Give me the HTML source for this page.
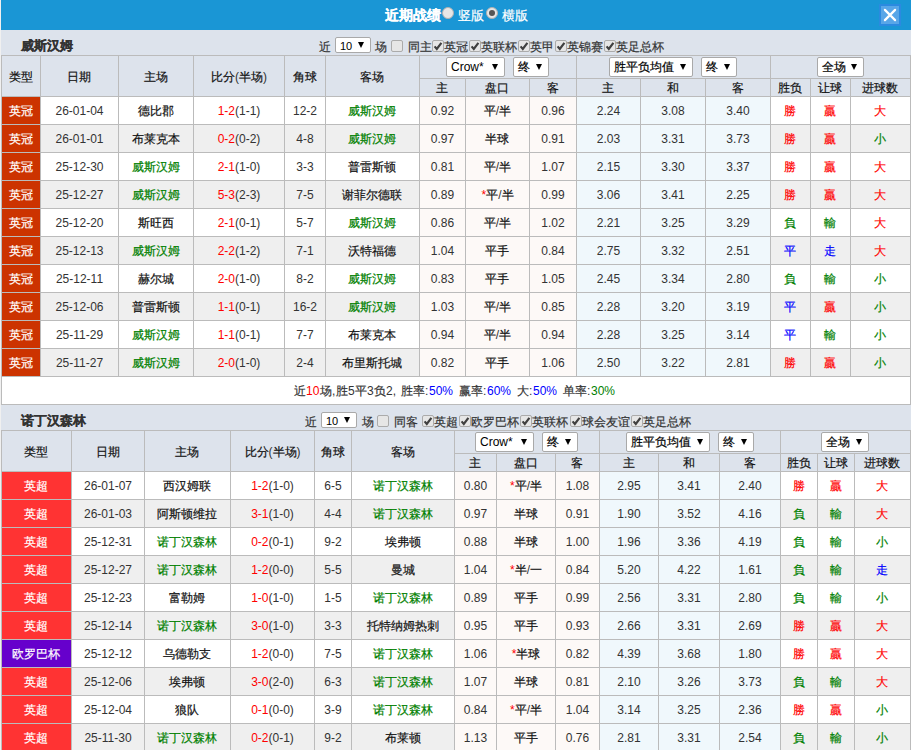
<!DOCTYPE html>
<html><head><meta charset="utf-8"><style>
html,body{margin:0;padding:0}
body{width:911px;height:750px;overflow:hidden;background:#f0f0f0;position:relative;font-family:"Liberation Sans", sans-serif;font-size:12px;color:#333}
#wrap{position:absolute;left:0;top:0;width:911px;height:750px;overflow:hidden}
#bg{position:absolute;left:1px;top:30px;width:910px;height:720px;background:#dde3ec}
#wrap div,#wrap svg{position:absolute}
.t{text-align:center;white-space:nowrap;font-size:12px}
.c{-webkit-text-stroke:0.2px currentColor}
.lt{white-space:nowrap;font-size:12px;color:#222}
.sec{font-weight:bold;font-size:13px;color:#333;white-space:nowrap}
.ttl{font-weight:bold;font-size:14px;color:#fff;white-space:nowrap}
.ttr{font-size:12.6px;color:#fff;white-space:nowrap}
.rad{width:10px;height:10px;border-radius:50%;background:#e6e6e6;border:1px solid #b0b0b0}
.rad .dot{left:2px;top:2px;width:6px;height:6px;border-radius:50%;background:#555}
.cls{width:18px;height:18px;background:#58a6e8;border:2px solid #2b8ae0}
.sel{background:#fff;border:1px solid #a9a9a9;border-radius:2px}
.selt{font-size:12px;color:#000;white-space:nowrap}
.arr{width:0;height:0;border-left:3px solid transparent;border-right:3px solid transparent;border-top:6px solid #000}
.cb{width:10px;height:10px;border:1px solid #ababab;border-radius:2px;background:#e6e6e6}
.ck{}
</style></head>
<body><div id="wrap"><div id="bg"></div>
<div style="left:1px;top:0px;width:910px;height:30px;background:#1a96d5"></div>
<div class="ttl" style="left:385px;top:0px;height:30px;line-height:30px"><span class="c">近期战绩</span></div>
<div class="rad" style="left:442px;top:7px"></div>
<div class="ttr" style="left:458px;top:1px;height:30px;line-height:30px"><span class="c">竖版</span></div>
<div class="rad" style="left:486px;top:7px"><div class="dot"></div></div>
<div class="ttr" style="left:502px;top:1px;height:30px;line-height:30px"><span class="c">横版</span></div>
<div class="cls" style="left:879px;top:4px"><svg width="22" height="22" viewBox="0 0 22 22" style="position:absolute;left:-2px;top:-2px"><path d="M5.9 5.9 L16.1 16.1 M16.1 5.9 L5.9 16.1" stroke="#fff" stroke-width="2.2" stroke-linecap="round"/></svg></div>
<div class="sec" style="left:21px;top:34px;height:24px;line-height:24px"><span class="c">威斯汉姆</span></div>
<div class="lt" style="left:319px;top:35px;height:24px;line-height:24px;color:#333"><span class="c">近</span></div>
<div class="sel" style="left:335px;top:37px;width:34px;height:14px"></div>
<div class="selt" style="left:340px;top:38px;height:16px;line-height:16px;font-size:11px">10</div>
<div class="arr" style="left:358px;top:42px"></div>
<div class="lt" style="left:375px;top:35px;height:24px;line-height:24px;color:#333"><span class="c">场</span></div>
<div class="cb" style="left:391px;top:40px"></div>
<div class="lt" style="left:408px;top:35px;height:24px;line-height:24px;color:#333"><span class="c">同主</span></div>
<div class="cb" style="left:432px;top:40px"></div>
<svg class="ck" style="left:432px;top:40px" width="12" height="12" viewBox="0 0 12 12"><path d="M2.6 6.4 L4.8 9.0 L9.4 2.9" stroke="#404040" stroke-width="2.2" fill="none"/></svg>
<div class="lt" style="left:444px;top:35px;height:24px;line-height:24px;color:#333"><span class="c">英冠</span></div>
<div class="cb" style="left:469px;top:40px"></div>
<svg class="ck" style="left:469px;top:40px" width="12" height="12" viewBox="0 0 12 12"><path d="M2.6 6.4 L4.8 9.0 L9.4 2.9" stroke="#404040" stroke-width="2.2" fill="none"/></svg>
<div class="lt" style="left:481px;top:35px;height:24px;line-height:24px;color:#333"><span class="c">英联杯</span></div>
<div class="cb" style="left:518px;top:40px"></div>
<svg class="ck" style="left:518px;top:40px" width="12" height="12" viewBox="0 0 12 12"><path d="M2.6 6.4 L4.8 9.0 L9.4 2.9" stroke="#404040" stroke-width="2.2" fill="none"/></svg>
<div class="lt" style="left:530px;top:35px;height:24px;line-height:24px;color:#333"><span class="c">英甲</span></div>
<div class="cb" style="left:555px;top:40px"></div>
<svg class="ck" style="left:555px;top:40px" width="12" height="12" viewBox="0 0 12 12"><path d="M2.6 6.4 L4.8 9.0 L9.4 2.9" stroke="#404040" stroke-width="2.2" fill="none"/></svg>
<div class="lt" style="left:567px;top:35px;height:24px;line-height:24px;color:#333"><span class="c">英锦赛</span></div>
<div class="cb" style="left:604px;top:40px"></div>
<svg class="ck" style="left:604px;top:40px" width="12" height="12" viewBox="0 0 12 12"><path d="M2.6 6.4 L4.8 9.0 L9.4 2.9" stroke="#404040" stroke-width="2.2" fill="none"/></svg>
<div class="lt" style="left:616px;top:35px;height:24px;line-height:24px;color:#333"><span class="c">英足总杯</span></div>
<div style="left:1px;top:55px;width:910px;height:41px;background:#dde3ec"></div>
<div style="left:1px;top:96px;width:910px;height:28px;background:#ffffff"></div>
<div style="left:419px;top:96px;width:157px;height:28px;background:#fdf9f7"></div>
<div style="left:576px;top:96px;width:194px;height:28px;background:#f0f8fc"></div>
<div style="left:2px;top:97px;width:38px;height:27px;background:#cc3300"></div>
<div style="left:1px;top:124px;width:910px;height:28px;background:#efefef"></div>
<div style="left:419px;top:124px;width:157px;height:28px;background:#fdf9f7"></div>
<div style="left:576px;top:124px;width:194px;height:28px;background:#f0f8fc"></div>
<div style="left:2px;top:125px;width:38px;height:27px;background:#cc3300"></div>
<div style="left:1px;top:152px;width:910px;height:28px;background:#ffffff"></div>
<div style="left:419px;top:152px;width:157px;height:28px;background:#fdf9f7"></div>
<div style="left:576px;top:152px;width:194px;height:28px;background:#f0f8fc"></div>
<div style="left:2px;top:153px;width:38px;height:27px;background:#cc3300"></div>
<div style="left:1px;top:180px;width:910px;height:28px;background:#efefef"></div>
<div style="left:419px;top:180px;width:157px;height:28px;background:#fdf9f7"></div>
<div style="left:576px;top:180px;width:194px;height:28px;background:#f0f8fc"></div>
<div style="left:2px;top:181px;width:38px;height:27px;background:#cc3300"></div>
<div style="left:1px;top:208px;width:910px;height:28px;background:#ffffff"></div>
<div style="left:419px;top:208px;width:157px;height:28px;background:#fdf9f7"></div>
<div style="left:576px;top:208px;width:194px;height:28px;background:#f0f8fc"></div>
<div style="left:2px;top:209px;width:38px;height:27px;background:#cc3300"></div>
<div style="left:1px;top:236px;width:910px;height:28px;background:#efefef"></div>
<div style="left:419px;top:236px;width:157px;height:28px;background:#fdf9f7"></div>
<div style="left:576px;top:236px;width:194px;height:28px;background:#f0f8fc"></div>
<div style="left:2px;top:237px;width:38px;height:27px;background:#cc3300"></div>
<div style="left:1px;top:264px;width:910px;height:28px;background:#ffffff"></div>
<div style="left:419px;top:264px;width:157px;height:28px;background:#fdf9f7"></div>
<div style="left:576px;top:264px;width:194px;height:28px;background:#f0f8fc"></div>
<div style="left:2px;top:265px;width:38px;height:27px;background:#cc3300"></div>
<div style="left:1px;top:292px;width:910px;height:28px;background:#efefef"></div>
<div style="left:419px;top:292px;width:157px;height:28px;background:#fdf9f7"></div>
<div style="left:576px;top:292px;width:194px;height:28px;background:#f0f8fc"></div>
<div style="left:2px;top:293px;width:38px;height:27px;background:#cc3300"></div>
<div style="left:1px;top:320px;width:910px;height:28px;background:#ffffff"></div>
<div style="left:419px;top:320px;width:157px;height:28px;background:#fdf9f7"></div>
<div style="left:576px;top:320px;width:194px;height:28px;background:#f0f8fc"></div>
<div style="left:2px;top:321px;width:38px;height:27px;background:#cc3300"></div>
<div style="left:1px;top:348px;width:910px;height:28px;background:#efefef"></div>
<div style="left:419px;top:348px;width:157px;height:28px;background:#fdf9f7"></div>
<div style="left:576px;top:348px;width:194px;height:28px;background:#f0f8fc"></div>
<div style="left:2px;top:349px;width:38px;height:27px;background:#cc3300"></div>
<div style="left:1px;top:376px;width:910px;height:28px;background:#ffffff"></div>
<div style="left:1px;top:55px;width:910px;height:1px;background:#bbbbbb"></div>
<div style="left:419px;top:78px;width:492px;height:1px;background:#bbbbbb"></div>
<div style="left:1px;top:96px;width:910px;height:1px;background:#bbbbbb"></div>
<div style="left:1px;top:124px;width:910px;height:1px;background:#bbbbbb"></div>
<div style="left:1px;top:152px;width:910px;height:1px;background:#bbbbbb"></div>
<div style="left:1px;top:180px;width:910px;height:1px;background:#bbbbbb"></div>
<div style="left:1px;top:208px;width:910px;height:1px;background:#bbbbbb"></div>
<div style="left:1px;top:236px;width:910px;height:1px;background:#bbbbbb"></div>
<div style="left:1px;top:264px;width:910px;height:1px;background:#bbbbbb"></div>
<div style="left:1px;top:292px;width:910px;height:1px;background:#bbbbbb"></div>
<div style="left:1px;top:320px;width:910px;height:1px;background:#bbbbbb"></div>
<div style="left:1px;top:348px;width:910px;height:1px;background:#bbbbbb"></div>
<div style="left:1px;top:376px;width:910px;height:1px;background:#bbbbbb"></div>
<div style="left:1px;top:404px;width:910px;height:1px;background:#bbbbbb"></div>
<div style="left:1px;top:55px;width:1px;height:350px;background:#bbbbbb"></div>
<div style="left:40px;top:55px;width:1px;height:322px;background:#bbbbbb"></div>
<div style="left:118px;top:55px;width:1px;height:322px;background:#bbbbbb"></div>
<div style="left:193px;top:55px;width:1px;height:322px;background:#bbbbbb"></div>
<div style="left:284px;top:55px;width:1px;height:322px;background:#bbbbbb"></div>
<div style="left:325px;top:55px;width:1px;height:322px;background:#bbbbbb"></div>
<div style="left:419px;top:55px;width:1px;height:322px;background:#bbbbbb"></div>
<div style="left:465px;top:78px;width:1px;height:299px;background:#bbbbbb"></div>
<div style="left:529px;top:78px;width:1px;height:299px;background:#bbbbbb"></div>
<div style="left:576px;top:55px;width:1px;height:322px;background:#bbbbbb"></div>
<div style="left:640px;top:78px;width:1px;height:299px;background:#bbbbbb"></div>
<div style="left:705px;top:78px;width:1px;height:299px;background:#bbbbbb"></div>
<div style="left:770px;top:55px;width:1px;height:322px;background:#bbbbbb"></div>
<div style="left:810px;top:78px;width:1px;height:299px;background:#bbbbbb"></div>
<div style="left:850px;top:78px;width:1px;height:299px;background:#bbbbbb"></div>
<div style="left:910px;top:55px;width:1px;height:350px;background:#bbbbbb"></div>
<div class="t" style="left:2px;top:57px;width:38px;height:40px;line-height:40px;color:#333"><span style="color:#111"><span class="c">类型</span></span></div>
<div class="t" style="left:41px;top:57px;width:76px;height:40px;line-height:40px;color:#333"><span style="color:#111"><span class="c">日期</span></span></div>
<div class="t" style="left:119px;top:57px;width:74px;height:40px;line-height:40px;color:#333"><span style="color:#111"><span class="c">主场</span></span></div>
<div class="t" style="left:194px;top:57px;width:90px;height:40px;line-height:40px;color:#333"><span style="color:#111"><span class="c">比分</span></span>(<span style="color:#111"><span class="c">半场</span></span>)</div>
<div class="t" style="left:285px;top:57px;width:40px;height:40px;line-height:40px;color:#333"><span style="color:#111"><span class="c">角球</span></span></div>
<div class="t" style="left:326px;top:57px;width:92px;height:40px;line-height:40px;color:#333"><span style="color:#111"><span class="c">客场</span></span></div>
<div class="t" style="left:420px;top:80px;width:44px;height:17px;line-height:17px;color:#333"><span style="color:#111"><span class="c">主</span></span></div>
<div class="t" style="left:466px;top:80px;width:62px;height:17px;line-height:17px;color:#333"><span style="color:#111"><span class="c">盘口</span></span></div>
<div class="t" style="left:530px;top:80px;width:46px;height:17px;line-height:17px;color:#333"><span style="color:#111"><span class="c">客</span></span></div>
<div class="t" style="left:577px;top:80px;width:62px;height:17px;line-height:17px;color:#333"><span style="color:#111"><span class="c">主</span></span></div>
<div class="t" style="left:641px;top:80px;width:64px;height:17px;line-height:17px;color:#333"><span style="color:#111"><span class="c">和</span></span></div>
<div class="t" style="left:706px;top:80px;width:64px;height:17px;line-height:17px;color:#333"><span style="color:#111"><span class="c">客</span></span></div>
<div class="t" style="left:771px;top:80px;width:38px;height:17px;line-height:17px;color:#333"><span style="color:#111"><span class="c">胜负</span></span></div>
<div class="t" style="left:811px;top:80px;width:38px;height:17px;line-height:17px;color:#333"><span style="color:#111"><span class="c">让球</span></span></div>
<div class="t" style="left:851px;top:80px;width:58px;height:17px;line-height:17px;color:#333"><span style="color:#111"><span class="c">进球数</span></span></div>
<div class="t" style="left:2px;top:98px;width:38px;height:27px;line-height:27px;color:#ffffff"><span class="c">英冠</span></div>
<div class="t" style="left:41px;top:98px;width:77px;height:27px;line-height:27px;color:#333">26-01-04</div>
<div class="t" style="left:119px;top:98px;width:74px;height:27px;line-height:27px;color:#333"><span style="color:#111"><span class="c">德比郡</span></span></div>
<div class="t" style="left:194px;top:98px;width:90px;height:27px;line-height:27px;color:#333"><span style="color:#ff0000">1-2</span>(1-1)</div>
<div class="t" style="left:285px;top:98px;width:40px;height:27px;line-height:27px;color:#333">12-2</div>
<div class="t" style="left:326px;top:98px;width:92px;height:27px;line-height:27px;color:#333"><span style="color:#008000"><span class="c">威斯汉姆</span></span></div>
<div class="t" style="left:420px;top:98px;width:45px;height:27px;line-height:27px;color:#333">0.92</div>
<div class="t" style="left:466px;top:98px;width:63px;height:27px;line-height:27px;color:#333"><span style="color:#111"><span class="c">平</span></span>/<span style="color:#111"><span class="c">半</span></span></div>
<div class="t" style="left:530px;top:98px;width:46px;height:27px;line-height:27px;color:#333">0.96</div>
<div class="t" style="left:577px;top:98px;width:63px;height:27px;line-height:27px;color:#333">2.24</div>
<div class="t" style="left:641px;top:98px;width:64px;height:27px;line-height:27px;color:#333">3.08</div>
<div class="t" style="left:706px;top:98px;width:64px;height:27px;line-height:27px;color:#333">3.40</div>
<div class="t" style="left:771px;top:98px;width:38px;height:27px;line-height:27px;color:#ff0000"><span class="c">勝</span></div>
<div class="t" style="left:811px;top:98px;width:38px;height:27px;line-height:27px;color:#ff0000"><span class="c">贏</span></div>
<div class="t" style="left:851px;top:98px;width:58px;height:27px;line-height:27px;color:#ff0000"><span class="c">大</span></div>
<div class="t" style="left:2px;top:126px;width:38px;height:27px;line-height:27px;color:#ffffff"><span class="c">英冠</span></div>
<div class="t" style="left:41px;top:126px;width:77px;height:27px;line-height:27px;color:#333">26-01-01</div>
<div class="t" style="left:119px;top:126px;width:74px;height:27px;line-height:27px;color:#333"><span style="color:#111"><span class="c">布莱克本</span></span></div>
<div class="t" style="left:194px;top:126px;width:90px;height:27px;line-height:27px;color:#333"><span style="color:#ff0000">0-2</span>(0-2)</div>
<div class="t" style="left:285px;top:126px;width:40px;height:27px;line-height:27px;color:#333">4-8</div>
<div class="t" style="left:326px;top:126px;width:92px;height:27px;line-height:27px;color:#333"><span style="color:#008000"><span class="c">威斯汉姆</span></span></div>
<div class="t" style="left:420px;top:126px;width:45px;height:27px;line-height:27px;color:#333">0.97</div>
<div class="t" style="left:466px;top:126px;width:62px;height:27px;line-height:27px;color:#333"><span style="color:#111"><span class="c">半球</span></span></div>
<div class="t" style="left:530px;top:126px;width:46px;height:27px;line-height:27px;color:#333">0.91</div>
<div class="t" style="left:577px;top:126px;width:63px;height:27px;line-height:27px;color:#333">2.03</div>
<div class="t" style="left:641px;top:126px;width:64px;height:27px;line-height:27px;color:#333">3.31</div>
<div class="t" style="left:706px;top:126px;width:64px;height:27px;line-height:27px;color:#333">3.73</div>
<div class="t" style="left:771px;top:126px;width:38px;height:27px;line-height:27px;color:#ff0000"><span class="c">勝</span></div>
<div class="t" style="left:811px;top:126px;width:38px;height:27px;line-height:27px;color:#ff0000"><span class="c">贏</span></div>
<div class="t" style="left:851px;top:126px;width:58px;height:27px;line-height:27px;color:#008000"><span class="c">小</span></div>
<div class="t" style="left:2px;top:154px;width:38px;height:27px;line-height:27px;color:#ffffff"><span class="c">英冠</span></div>
<div class="t" style="left:41px;top:154px;width:77px;height:27px;line-height:27px;color:#333">25-12-30</div>
<div class="t" style="left:119px;top:154px;width:74px;height:27px;line-height:27px;color:#333"><span style="color:#008000"><span class="c">威斯汉姆</span></span></div>
<div class="t" style="left:194px;top:154px;width:90px;height:27px;line-height:27px;color:#333"><span style="color:#ff0000">2-1</span>(1-0)</div>
<div class="t" style="left:285px;top:154px;width:40px;height:27px;line-height:27px;color:#333">3-3</div>
<div class="t" style="left:326px;top:154px;width:92px;height:27px;line-height:27px;color:#333"><span style="color:#111"><span class="c">普雷斯顿</span></span></div>
<div class="t" style="left:420px;top:154px;width:45px;height:27px;line-height:27px;color:#333">0.81</div>
<div class="t" style="left:466px;top:154px;width:63px;height:27px;line-height:27px;color:#333"><span style="color:#111"><span class="c">平</span></span>/<span style="color:#111"><span class="c">半</span></span></div>
<div class="t" style="left:530px;top:154px;width:46px;height:27px;line-height:27px;color:#333">1.07</div>
<div class="t" style="left:577px;top:154px;width:63px;height:27px;line-height:27px;color:#333">2.15</div>
<div class="t" style="left:641px;top:154px;width:64px;height:27px;line-height:27px;color:#333">3.30</div>
<div class="t" style="left:706px;top:154px;width:64px;height:27px;line-height:27px;color:#333">3.37</div>
<div class="t" style="left:771px;top:154px;width:38px;height:27px;line-height:27px;color:#ff0000"><span class="c">勝</span></div>
<div class="t" style="left:811px;top:154px;width:38px;height:27px;line-height:27px;color:#ff0000"><span class="c">贏</span></div>
<div class="t" style="left:851px;top:154px;width:58px;height:27px;line-height:27px;color:#ff0000"><span class="c">大</span></div>
<div class="t" style="left:2px;top:182px;width:38px;height:27px;line-height:27px;color:#ffffff"><span class="c">英冠</span></div>
<div class="t" style="left:41px;top:182px;width:77px;height:27px;line-height:27px;color:#333">25-12-27</div>
<div class="t" style="left:119px;top:182px;width:74px;height:27px;line-height:27px;color:#333"><span style="color:#008000"><span class="c">威斯汉姆</span></span></div>
<div class="t" style="left:194px;top:182px;width:90px;height:27px;line-height:27px;color:#333"><span style="color:#ff0000">5-3</span>(2-3)</div>
<div class="t" style="left:285px;top:182px;width:40px;height:27px;line-height:27px;color:#333">7-5</div>
<div class="t" style="left:326px;top:182px;width:92px;height:27px;line-height:27px;color:#333"><span style="color:#111"><span class="c">谢菲尔德联</span></span></div>
<div class="t" style="left:420px;top:182px;width:45px;height:27px;line-height:27px;color:#333">0.89</div>
<div class="t" style="left:466px;top:182px;width:63px;height:27px;line-height:27px;color:#333"><span style="color:#ff0000">*</span><span style="color:#111"><span class="c">平</span></span>/<span style="color:#111"><span class="c">半</span></span></div>
<div class="t" style="left:530px;top:182px;width:46px;height:27px;line-height:27px;color:#333">0.99</div>
<div class="t" style="left:577px;top:182px;width:63px;height:27px;line-height:27px;color:#333">3.06</div>
<div class="t" style="left:641px;top:182px;width:64px;height:27px;line-height:27px;color:#333">3.41</div>
<div class="t" style="left:706px;top:182px;width:64px;height:27px;line-height:27px;color:#333">2.25</div>
<div class="t" style="left:771px;top:182px;width:38px;height:27px;line-height:27px;color:#ff0000"><span class="c">勝</span></div>
<div class="t" style="left:811px;top:182px;width:38px;height:27px;line-height:27px;color:#ff0000"><span class="c">贏</span></div>
<div class="t" style="left:851px;top:182px;width:58px;height:27px;line-height:27px;color:#ff0000"><span class="c">大</span></div>
<div class="t" style="left:2px;top:210px;width:38px;height:27px;line-height:27px;color:#ffffff"><span class="c">英冠</span></div>
<div class="t" style="left:41px;top:210px;width:77px;height:27px;line-height:27px;color:#333">25-12-20</div>
<div class="t" style="left:119px;top:210px;width:74px;height:27px;line-height:27px;color:#333"><span style="color:#111"><span class="c">斯旺西</span></span></div>
<div class="t" style="left:194px;top:210px;width:90px;height:27px;line-height:27px;color:#333"><span style="color:#ff0000">2-1</span>(0-1)</div>
<div class="t" style="left:285px;top:210px;width:40px;height:27px;line-height:27px;color:#333">5-7</div>
<div class="t" style="left:326px;top:210px;width:92px;height:27px;line-height:27px;color:#333"><span style="color:#008000"><span class="c">威斯汉姆</span></span></div>
<div class="t" style="left:420px;top:210px;width:45px;height:27px;line-height:27px;color:#333">0.86</div>
<div class="t" style="left:466px;top:210px;width:63px;height:27px;line-height:27px;color:#333"><span style="color:#111"><span class="c">平</span></span>/<span style="color:#111"><span class="c">半</span></span></div>
<div class="t" style="left:530px;top:210px;width:46px;height:27px;line-height:27px;color:#333">1.02</div>
<div class="t" style="left:577px;top:210px;width:63px;height:27px;line-height:27px;color:#333">2.21</div>
<div class="t" style="left:641px;top:210px;width:64px;height:27px;line-height:27px;color:#333">3.25</div>
<div class="t" style="left:706px;top:210px;width:64px;height:27px;line-height:27px;color:#333">3.29</div>
<div class="t" style="left:771px;top:210px;width:38px;height:27px;line-height:27px;color:#008000"><span class="c">負</span></div>
<div class="t" style="left:811px;top:210px;width:38px;height:27px;line-height:27px;color:#008000"><span class="c">輸</span></div>
<div class="t" style="left:851px;top:210px;width:58px;height:27px;line-height:27px;color:#ff0000"><span class="c">大</span></div>
<div class="t" style="left:2px;top:238px;width:38px;height:27px;line-height:27px;color:#ffffff"><span class="c">英冠</span></div>
<div class="t" style="left:41px;top:238px;width:77px;height:27px;line-height:27px;color:#333">25-12-13</div>
<div class="t" style="left:119px;top:238px;width:74px;height:27px;line-height:27px;color:#333"><span style="color:#008000"><span class="c">威斯汉姆</span></span></div>
<div class="t" style="left:194px;top:238px;width:90px;height:27px;line-height:27px;color:#333"><span style="color:#ff0000">2-2</span>(1-2)</div>
<div class="t" style="left:285px;top:238px;width:40px;height:27px;line-height:27px;color:#333">7-1</div>
<div class="t" style="left:326px;top:238px;width:92px;height:27px;line-height:27px;color:#333"><span style="color:#111"><span class="c">沃特福德</span></span></div>
<div class="t" style="left:420px;top:238px;width:45px;height:27px;line-height:27px;color:#333">1.04</div>
<div class="t" style="left:466px;top:238px;width:62px;height:27px;line-height:27px;color:#333"><span style="color:#111"><span class="c">平手</span></span></div>
<div class="t" style="left:530px;top:238px;width:46px;height:27px;line-height:27px;color:#333">0.84</div>
<div class="t" style="left:577px;top:238px;width:63px;height:27px;line-height:27px;color:#333">2.75</div>
<div class="t" style="left:641px;top:238px;width:64px;height:27px;line-height:27px;color:#333">3.32</div>
<div class="t" style="left:706px;top:238px;width:64px;height:27px;line-height:27px;color:#333">2.51</div>
<div class="t" style="left:771px;top:238px;width:38px;height:27px;line-height:27px;color:#0000ff"><span class="c">平</span></div>
<div class="t" style="left:811px;top:238px;width:38px;height:27px;line-height:27px;color:#0000ff"><span class="c">走</span></div>
<div class="t" style="left:851px;top:238px;width:58px;height:27px;line-height:27px;color:#ff0000"><span class="c">大</span></div>
<div class="t" style="left:2px;top:266px;width:38px;height:27px;line-height:27px;color:#ffffff"><span class="c">英冠</span></div>
<div class="t" style="left:41px;top:266px;width:77px;height:27px;line-height:27px;color:#333">25-12-11</div>
<div class="t" style="left:119px;top:266px;width:74px;height:27px;line-height:27px;color:#333"><span style="color:#111"><span class="c">赫尔城</span></span></div>
<div class="t" style="left:194px;top:266px;width:90px;height:27px;line-height:27px;color:#333"><span style="color:#ff0000">2-0</span>(1-0)</div>
<div class="t" style="left:285px;top:266px;width:40px;height:27px;line-height:27px;color:#333">8-2</div>
<div class="t" style="left:326px;top:266px;width:92px;height:27px;line-height:27px;color:#333"><span style="color:#008000"><span class="c">威斯汉姆</span></span></div>
<div class="t" style="left:420px;top:266px;width:45px;height:27px;line-height:27px;color:#333">0.83</div>
<div class="t" style="left:466px;top:266px;width:62px;height:27px;line-height:27px;color:#333"><span style="color:#111"><span class="c">平手</span></span></div>
<div class="t" style="left:530px;top:266px;width:46px;height:27px;line-height:27px;color:#333">1.05</div>
<div class="t" style="left:577px;top:266px;width:63px;height:27px;line-height:27px;color:#333">2.45</div>
<div class="t" style="left:641px;top:266px;width:64px;height:27px;line-height:27px;color:#333">3.34</div>
<div class="t" style="left:706px;top:266px;width:64px;height:27px;line-height:27px;color:#333">2.80</div>
<div class="t" style="left:771px;top:266px;width:38px;height:27px;line-height:27px;color:#008000"><span class="c">負</span></div>
<div class="t" style="left:811px;top:266px;width:38px;height:27px;line-height:27px;color:#008000"><span class="c">輸</span></div>
<div class="t" style="left:851px;top:266px;width:58px;height:27px;line-height:27px;color:#008000"><span class="c">小</span></div>
<div class="t" style="left:2px;top:294px;width:38px;height:27px;line-height:27px;color:#ffffff"><span class="c">英冠</span></div>
<div class="t" style="left:41px;top:294px;width:77px;height:27px;line-height:27px;color:#333">25-12-06</div>
<div class="t" style="left:119px;top:294px;width:74px;height:27px;line-height:27px;color:#333"><span style="color:#111"><span class="c">普雷斯顿</span></span></div>
<div class="t" style="left:194px;top:294px;width:90px;height:27px;line-height:27px;color:#333"><span style="color:#ff0000">1-1</span>(0-1)</div>
<div class="t" style="left:285px;top:294px;width:40px;height:27px;line-height:27px;color:#333">16-2</div>
<div class="t" style="left:326px;top:294px;width:92px;height:27px;line-height:27px;color:#333"><span style="color:#008000"><span class="c">威斯汉姆</span></span></div>
<div class="t" style="left:420px;top:294px;width:45px;height:27px;line-height:27px;color:#333">1.03</div>
<div class="t" style="left:466px;top:294px;width:63px;height:27px;line-height:27px;color:#333"><span style="color:#111"><span class="c">平</span></span>/<span style="color:#111"><span class="c">半</span></span></div>
<div class="t" style="left:530px;top:294px;width:46px;height:27px;line-height:27px;color:#333">0.85</div>
<div class="t" style="left:577px;top:294px;width:63px;height:27px;line-height:27px;color:#333">2.28</div>
<div class="t" style="left:641px;top:294px;width:64px;height:27px;line-height:27px;color:#333">3.20</div>
<div class="t" style="left:706px;top:294px;width:64px;height:27px;line-height:27px;color:#333">3.19</div>
<div class="t" style="left:771px;top:294px;width:38px;height:27px;line-height:27px;color:#0000ff"><span class="c">平</span></div>
<div class="t" style="left:811px;top:294px;width:38px;height:27px;line-height:27px;color:#ff0000"><span class="c">贏</span></div>
<div class="t" style="left:851px;top:294px;width:58px;height:27px;line-height:27px;color:#008000"><span class="c">小</span></div>
<div class="t" style="left:2px;top:322px;width:38px;height:27px;line-height:27px;color:#ffffff"><span class="c">英冠</span></div>
<div class="t" style="left:41px;top:322px;width:77px;height:27px;line-height:27px;color:#333">25-11-29</div>
<div class="t" style="left:119px;top:322px;width:74px;height:27px;line-height:27px;color:#333"><span style="color:#008000"><span class="c">威斯汉姆</span></span></div>
<div class="t" style="left:194px;top:322px;width:90px;height:27px;line-height:27px;color:#333"><span style="color:#ff0000">1-1</span>(0-1)</div>
<div class="t" style="left:285px;top:322px;width:40px;height:27px;line-height:27px;color:#333">7-7</div>
<div class="t" style="left:326px;top:322px;width:92px;height:27px;line-height:27px;color:#333"><span style="color:#111"><span class="c">布莱克本</span></span></div>
<div class="t" style="left:420px;top:322px;width:45px;height:27px;line-height:27px;color:#333">0.94</div>
<div class="t" style="left:466px;top:322px;width:63px;height:27px;line-height:27px;color:#333"><span style="color:#111"><span class="c">平</span></span>/<span style="color:#111"><span class="c">半</span></span></div>
<div class="t" style="left:530px;top:322px;width:46px;height:27px;line-height:27px;color:#333">0.94</div>
<div class="t" style="left:577px;top:322px;width:63px;height:27px;line-height:27px;color:#333">2.28</div>
<div class="t" style="left:641px;top:322px;width:64px;height:27px;line-height:27px;color:#333">3.25</div>
<div class="t" style="left:706px;top:322px;width:64px;height:27px;line-height:27px;color:#333">3.14</div>
<div class="t" style="left:771px;top:322px;width:38px;height:27px;line-height:27px;color:#0000ff"><span class="c">平</span></div>
<div class="t" style="left:811px;top:322px;width:38px;height:27px;line-height:27px;color:#008000"><span class="c">輸</span></div>
<div class="t" style="left:851px;top:322px;width:58px;height:27px;line-height:27px;color:#008000"><span class="c">小</span></div>
<div class="t" style="left:2px;top:350px;width:38px;height:27px;line-height:27px;color:#ffffff"><span class="c">英冠</span></div>
<div class="t" style="left:41px;top:350px;width:77px;height:27px;line-height:27px;color:#333">25-11-27</div>
<div class="t" style="left:119px;top:350px;width:74px;height:27px;line-height:27px;color:#333"><span style="color:#008000"><span class="c">威斯汉姆</span></span></div>
<div class="t" style="left:194px;top:350px;width:90px;height:27px;line-height:27px;color:#333"><span style="color:#ff0000">2-0</span>(1-0)</div>
<div class="t" style="left:285px;top:350px;width:40px;height:27px;line-height:27px;color:#333">2-4</div>
<div class="t" style="left:326px;top:350px;width:92px;height:27px;line-height:27px;color:#333"><span style="color:#111"><span class="c">布里斯托城</span></span></div>
<div class="t" style="left:420px;top:350px;width:45px;height:27px;line-height:27px;color:#333">0.82</div>
<div class="t" style="left:466px;top:350px;width:62px;height:27px;line-height:27px;color:#333"><span style="color:#111"><span class="c">平手</span></span></div>
<div class="t" style="left:530px;top:350px;width:46px;height:27px;line-height:27px;color:#333">1.06</div>
<div class="t" style="left:577px;top:350px;width:63px;height:27px;line-height:27px;color:#333">2.50</div>
<div class="t" style="left:641px;top:350px;width:64px;height:27px;line-height:27px;color:#333">3.22</div>
<div class="t" style="left:706px;top:350px;width:64px;height:27px;line-height:27px;color:#333">2.81</div>
<div class="t" style="left:771px;top:350px;width:38px;height:27px;line-height:27px;color:#ff0000"><span class="c">勝</span></div>
<div class="t" style="left:811px;top:350px;width:38px;height:27px;line-height:27px;color:#ff0000"><span class="c">贏</span></div>
<div class="t" style="left:851px;top:350px;width:58px;height:27px;line-height:27px;color:#008000"><span class="c">小</span></div>
<div class="lt" style="left:294px;top:378px;height:27px;line-height:27px;color:#333"><span class="c">近</span></div>
<div class="lt" style="left:306px;top:378px;height:27px;line-height:27px;color:#ff0000">10</div>
<div class="lt" style="left:320px;top:378px;height:27px;line-height:27px;color:#333"><span class="c">场</span>,</div>
<div class="lt" style="left:336px;top:378px;height:27px;line-height:27px;color:#333"><span class="c">胜</span></div>
<div class="lt" style="left:348px;top:378px;height:27px;line-height:27px;color:#333">5</div>
<div class="lt" style="left:355px;top:378px;height:27px;line-height:27px;color:#333"><span class="c">平</span></div>
<div class="lt" style="left:367px;top:378px;height:27px;line-height:27px;color:#333">3</div>
<div class="lt" style="left:374px;top:378px;height:27px;line-height:27px;color:#333"><span class="c">负</span></div>
<div class="lt" style="left:386px;top:378px;height:27px;line-height:27px;color:#333">2,</div>
<div class="lt" style="left:401px;top:378px;height:27px;line-height:27px;color:#333"><span class="c">胜率</span></div>
<div class="lt" style="left:425px;top:378px;height:27px;line-height:27px;color:#333">:</div>
<div class="lt" style="left:429px;top:378px;height:27px;line-height:27px;color:#0000ff">50%</div>
<div class="lt" style="left:459px;top:378px;height:27px;line-height:27px;color:#333"><span class="c">赢率</span></div>
<div class="lt" style="left:483px;top:378px;height:27px;line-height:27px;color:#333">:</div>
<div class="lt" style="left:487px;top:378px;height:27px;line-height:27px;color:#0000ff">60%</div>
<div class="lt" style="left:517px;top:378px;height:27px;line-height:27px;color:#333"><span class="c">大</span></div>
<div class="lt" style="left:529px;top:378px;height:27px;line-height:27px;color:#333">:</div>
<div class="lt" style="left:533px;top:378px;height:27px;line-height:27px;color:#0000ff">50%</div>
<div class="lt" style="left:563px;top:378px;height:27px;line-height:27px;color:#333"><span class="c">单率</span></div>
<div class="lt" style="left:587px;top:378px;height:27px;line-height:27px;color:#333">:</div>
<div class="lt" style="left:591px;top:378px;height:27px;line-height:27px;color:#008000">30%</div>
<div class="sel" style="left:446px;top:57px;width:57px;height:18px"></div>
<div class="selt" style="left:451px;top:57px;height:20px;line-height:20px;font-size:12px">Crow*</div>
<div class="arr" style="left:492px;top:64px"></div>
<div class="sel" style="left:513px;top:57px;width:34px;height:18px"></div>
<div class="selt" style="left:518px;top:57px;height:20px;line-height:20px;font-size:12px"><span class="c">终</span></div>
<div class="arr" style="left:536px;top:64px"></div>
<div class="sel" style="left:609px;top:57px;width:82px;height:18px"></div>
<div class="selt" style="left:614px;top:57px;height:20px;line-height:20px;font-size:12px"><span class="c">胜平负均值</span></div>
<div class="arr" style="left:680px;top:64px"></div>
<div class="sel" style="left:701px;top:57px;width:34px;height:18px"></div>
<div class="selt" style="left:706px;top:57px;height:20px;line-height:20px;font-size:12px"><span class="c">终</span></div>
<div class="arr" style="left:724px;top:64px"></div>
<div class="sel" style="left:817px;top:57px;width:45px;height:18px"></div>
<div class="selt" style="left:822px;top:57px;height:20px;line-height:20px;font-size:12px"><span class="c">全场</span></div>
<div class="arr" style="left:851px;top:64px"></div>
<div class="sec" style="left:21px;top:409px;height:24px;line-height:24px"><span class="c">诺丁汉森林</span></div>
<div class="lt" style="left:305px;top:410px;height:24px;line-height:24px;color:#333"><span class="c">近</span></div>
<div class="sel" style="left:321px;top:412px;width:34px;height:14px"></div>
<div class="selt" style="left:326px;top:413px;height:16px;line-height:16px;font-size:11px">10</div>
<div class="arr" style="left:344px;top:417px"></div>
<div class="lt" style="left:362px;top:410px;height:24px;line-height:24px;color:#333"><span class="c">场</span></div>
<div class="cb" style="left:377px;top:415px"></div>
<div class="lt" style="left:394px;top:410px;height:24px;line-height:24px;color:#333"><span class="c">同客</span></div>
<div class="cb" style="left:422px;top:415px"></div>
<svg class="ck" style="left:422px;top:415px" width="12" height="12" viewBox="0 0 12 12"><path d="M2.6 6.4 L4.8 9.0 L9.4 2.9" stroke="#404040" stroke-width="2.2" fill="none"/></svg>
<div class="lt" style="left:434px;top:410px;height:24px;line-height:24px;color:#333"><span class="c">英超</span></div>
<div class="cb" style="left:459px;top:415px"></div>
<svg class="ck" style="left:459px;top:415px" width="12" height="12" viewBox="0 0 12 12"><path d="M2.6 6.4 L4.8 9.0 L9.4 2.9" stroke="#404040" stroke-width="2.2" fill="none"/></svg>
<div class="lt" style="left:471px;top:410px;height:24px;line-height:24px;color:#333"><span class="c">欧罗巴杯</span></div>
<div class="cb" style="left:520px;top:415px"></div>
<svg class="ck" style="left:520px;top:415px" width="12" height="12" viewBox="0 0 12 12"><path d="M2.6 6.4 L4.8 9.0 L9.4 2.9" stroke="#404040" stroke-width="2.2" fill="none"/></svg>
<div class="lt" style="left:532px;top:410px;height:24px;line-height:24px;color:#333"><span class="c">英联杯</span></div>
<div class="cb" style="left:570px;top:415px"></div>
<svg class="ck" style="left:570px;top:415px" width="12" height="12" viewBox="0 0 12 12"><path d="M2.6 6.4 L4.8 9.0 L9.4 2.9" stroke="#404040" stroke-width="2.2" fill="none"/></svg>
<div class="lt" style="left:582px;top:410px;height:24px;line-height:24px;color:#333"><span class="c">球会友谊</span></div>
<div class="cb" style="left:631px;top:415px"></div>
<svg class="ck" style="left:631px;top:415px" width="12" height="12" viewBox="0 0 12 12"><path d="M2.6 6.4 L4.8 9.0 L9.4 2.9" stroke="#404040" stroke-width="2.2" fill="none"/></svg>
<div class="lt" style="left:643px;top:410px;height:24px;line-height:24px;color:#333"><span class="c">英足总杯</span></div>
<div style="left:1px;top:430px;width:910px;height:41px;background:#dde3ec"></div>
<div style="left:1px;top:471px;width:910px;height:28px;background:#ffffff"></div>
<div style="left:454px;top:471px;width:145px;height:28px;background:#fdf9f7"></div>
<div style="left:599px;top:471px;width:181px;height:28px;background:#f0f8fc"></div>
<div style="left:2px;top:472px;width:69px;height:27px;background:#ff3333"></div>
<div style="left:1px;top:499px;width:910px;height:28px;background:#efefef"></div>
<div style="left:454px;top:499px;width:145px;height:28px;background:#fdf9f7"></div>
<div style="left:599px;top:499px;width:181px;height:28px;background:#f0f8fc"></div>
<div style="left:2px;top:500px;width:69px;height:27px;background:#ff3333"></div>
<div style="left:1px;top:527px;width:910px;height:28px;background:#ffffff"></div>
<div style="left:454px;top:527px;width:145px;height:28px;background:#fdf9f7"></div>
<div style="left:599px;top:527px;width:181px;height:28px;background:#f0f8fc"></div>
<div style="left:2px;top:528px;width:69px;height:27px;background:#ff3333"></div>
<div style="left:1px;top:555px;width:910px;height:28px;background:#efefef"></div>
<div style="left:454px;top:555px;width:145px;height:28px;background:#fdf9f7"></div>
<div style="left:599px;top:555px;width:181px;height:28px;background:#f0f8fc"></div>
<div style="left:2px;top:556px;width:69px;height:27px;background:#ff3333"></div>
<div style="left:1px;top:583px;width:910px;height:28px;background:#ffffff"></div>
<div style="left:454px;top:583px;width:145px;height:28px;background:#fdf9f7"></div>
<div style="left:599px;top:583px;width:181px;height:28px;background:#f0f8fc"></div>
<div style="left:2px;top:584px;width:69px;height:27px;background:#ff3333"></div>
<div style="left:1px;top:611px;width:910px;height:28px;background:#efefef"></div>
<div style="left:454px;top:611px;width:145px;height:28px;background:#fdf9f7"></div>
<div style="left:599px;top:611px;width:181px;height:28px;background:#f0f8fc"></div>
<div style="left:2px;top:612px;width:69px;height:27px;background:#ff3333"></div>
<div style="left:1px;top:639px;width:910px;height:28px;background:#ffffff"></div>
<div style="left:454px;top:639px;width:145px;height:28px;background:#fdf9f7"></div>
<div style="left:599px;top:639px;width:181px;height:28px;background:#f0f8fc"></div>
<div style="left:2px;top:640px;width:69px;height:27px;background:#6600cc"></div>
<div style="left:1px;top:667px;width:910px;height:28px;background:#efefef"></div>
<div style="left:454px;top:667px;width:145px;height:28px;background:#fdf9f7"></div>
<div style="left:599px;top:667px;width:181px;height:28px;background:#f0f8fc"></div>
<div style="left:2px;top:668px;width:69px;height:27px;background:#ff3333"></div>
<div style="left:1px;top:695px;width:910px;height:28px;background:#ffffff"></div>
<div style="left:454px;top:695px;width:145px;height:28px;background:#fdf9f7"></div>
<div style="left:599px;top:695px;width:181px;height:28px;background:#f0f8fc"></div>
<div style="left:2px;top:696px;width:69px;height:27px;background:#ff3333"></div>
<div style="left:1px;top:723px;width:910px;height:28px;background:#efefef"></div>
<div style="left:454px;top:723px;width:145px;height:28px;background:#fdf9f7"></div>
<div style="left:599px;top:723px;width:181px;height:28px;background:#f0f8fc"></div>
<div style="left:2px;top:724px;width:69px;height:27px;background:#ff3333"></div>
<div style="left:1px;top:430px;width:910px;height:1px;background:#bbbbbb"></div>
<div style="left:454px;top:453px;width:457px;height:1px;background:#bbbbbb"></div>
<div style="left:1px;top:471px;width:910px;height:1px;background:#bbbbbb"></div>
<div style="left:1px;top:499px;width:910px;height:1px;background:#bbbbbb"></div>
<div style="left:1px;top:527px;width:910px;height:1px;background:#bbbbbb"></div>
<div style="left:1px;top:555px;width:910px;height:1px;background:#bbbbbb"></div>
<div style="left:1px;top:583px;width:910px;height:1px;background:#bbbbbb"></div>
<div style="left:1px;top:611px;width:910px;height:1px;background:#bbbbbb"></div>
<div style="left:1px;top:639px;width:910px;height:1px;background:#bbbbbb"></div>
<div style="left:1px;top:667px;width:910px;height:1px;background:#bbbbbb"></div>
<div style="left:1px;top:695px;width:910px;height:1px;background:#bbbbbb"></div>
<div style="left:1px;top:723px;width:910px;height:1px;background:#bbbbbb"></div>
<div style="left:1px;top:751px;width:910px;height:1px;background:#bbbbbb"></div>
<div style="left:1px;top:430px;width:1px;height:322px;background:#bbbbbb"></div>
<div style="left:71px;top:430px;width:1px;height:322px;background:#bbbbbb"></div>
<div style="left:144px;top:430px;width:1px;height:322px;background:#bbbbbb"></div>
<div style="left:230px;top:430px;width:1px;height:322px;background:#bbbbbb"></div>
<div style="left:314px;top:430px;width:1px;height:322px;background:#bbbbbb"></div>
<div style="left:351px;top:430px;width:1px;height:322px;background:#bbbbbb"></div>
<div style="left:454px;top:430px;width:1px;height:322px;background:#bbbbbb"></div>
<div style="left:496px;top:453px;width:1px;height:299px;background:#bbbbbb"></div>
<div style="left:555px;top:453px;width:1px;height:299px;background:#bbbbbb"></div>
<div style="left:599px;top:430px;width:1px;height:322px;background:#bbbbbb"></div>
<div style="left:658px;top:453px;width:1px;height:299px;background:#bbbbbb"></div>
<div style="left:719px;top:453px;width:1px;height:299px;background:#bbbbbb"></div>
<div style="left:780px;top:430px;width:1px;height:322px;background:#bbbbbb"></div>
<div style="left:817px;top:453px;width:1px;height:299px;background:#bbbbbb"></div>
<div style="left:854px;top:453px;width:1px;height:299px;background:#bbbbbb"></div>
<div style="left:910px;top:430px;width:1px;height:322px;background:#bbbbbb"></div>
<div class="t" style="left:2px;top:432px;width:68px;height:40px;line-height:40px;color:#333"><span style="color:#111"><span class="c">类型</span></span></div>
<div class="t" style="left:72px;top:432px;width:72px;height:40px;line-height:40px;color:#333"><span style="color:#111"><span class="c">日期</span></span></div>
<div class="t" style="left:145px;top:432px;width:84px;height:40px;line-height:40px;color:#333"><span style="color:#111"><span class="c">主场</span></span></div>
<div class="t" style="left:231px;top:432px;width:83px;height:40px;line-height:40px;color:#333"><span style="color:#111"><span class="c">比分</span></span>(<span style="color:#111"><span class="c">半场</span></span>)</div>
<div class="t" style="left:315px;top:432px;width:36px;height:40px;line-height:40px;color:#333"><span style="color:#111"><span class="c">角球</span></span></div>
<div class="t" style="left:352px;top:432px;width:102px;height:40px;line-height:40px;color:#333"><span style="color:#111"><span class="c">客场</span></span></div>
<div class="t" style="left:455px;top:455px;width:40px;height:17px;line-height:17px;color:#333"><span style="color:#111"><span class="c">主</span></span></div>
<div class="t" style="left:497px;top:455px;width:58px;height:17px;line-height:17px;color:#333"><span style="color:#111"><span class="c">盘口</span></span></div>
<div class="t" style="left:556px;top:455px;width:42px;height:17px;line-height:17px;color:#333"><span style="color:#111"><span class="c">客</span></span></div>
<div class="t" style="left:600px;top:455px;width:58px;height:17px;line-height:17px;color:#333"><span style="color:#111"><span class="c">主</span></span></div>
<div class="t" style="left:659px;top:455px;width:60px;height:17px;line-height:17px;color:#333"><span style="color:#111"><span class="c">和</span></span></div>
<div class="t" style="left:720px;top:455px;width:60px;height:17px;line-height:17px;color:#333"><span style="color:#111"><span class="c">客</span></span></div>
<div class="t" style="left:781px;top:455px;width:36px;height:17px;line-height:17px;color:#333"><span style="color:#111"><span class="c">胜负</span></span></div>
<div class="t" style="left:818px;top:455px;width:36px;height:17px;line-height:17px;color:#333"><span style="color:#111"><span class="c">让球</span></span></div>
<div class="t" style="left:855px;top:455px;width:54px;height:17px;line-height:17px;color:#333"><span style="color:#111"><span class="c">进球数</span></span></div>
<div class="t" style="left:2px;top:473px;width:68px;height:27px;line-height:27px;color:#ffffff"><span class="c">英超</span></div>
<div class="t" style="left:72px;top:473px;width:72px;height:27px;line-height:27px;color:#333">26-01-07</div>
<div class="t" style="left:145px;top:473px;width:84px;height:27px;line-height:27px;color:#333"><span style="color:#111"><span class="c">西汉姆联</span></span></div>
<div class="t" style="left:231px;top:473px;width:83px;height:27px;line-height:27px;color:#333"><span style="color:#ff0000">1-2</span>(1-0)</div>
<div class="t" style="left:315px;top:473px;width:36px;height:27px;line-height:27px;color:#333">6-5</div>
<div class="t" style="left:352px;top:473px;width:102px;height:27px;line-height:27px;color:#333"><span style="color:#008000"><span class="c">诺丁汉森林</span></span></div>
<div class="t" style="left:455px;top:473px;width:41px;height:27px;line-height:27px;color:#333">0.80</div>
<div class="t" style="left:497px;top:473px;width:58px;height:27px;line-height:27px;color:#333"><span style="color:#ff0000">*</span><span style="color:#111"><span class="c">平</span></span>/<span style="color:#111"><span class="c">半</span></span></div>
<div class="t" style="left:556px;top:473px;width:43px;height:27px;line-height:27px;color:#333">1.08</div>
<div class="t" style="left:600px;top:473px;width:58px;height:27px;line-height:27px;color:#333">2.95</div>
<div class="t" style="left:659px;top:473px;width:60px;height:27px;line-height:27px;color:#333">3.41</div>
<div class="t" style="left:720px;top:473px;width:60px;height:27px;line-height:27px;color:#333">2.40</div>
<div class="t" style="left:781px;top:473px;width:36px;height:27px;line-height:27px;color:#ff0000"><span class="c">勝</span></div>
<div class="t" style="left:818px;top:473px;width:36px;height:27px;line-height:27px;color:#ff0000"><span class="c">贏</span></div>
<div class="t" style="left:855px;top:473px;width:54px;height:27px;line-height:27px;color:#ff0000"><span class="c">大</span></div>
<div class="t" style="left:2px;top:501px;width:68px;height:27px;line-height:27px;color:#ffffff"><span class="c">英超</span></div>
<div class="t" style="left:72px;top:501px;width:72px;height:27px;line-height:27px;color:#333">26-01-03</div>
<div class="t" style="left:145px;top:501px;width:84px;height:27px;line-height:27px;color:#333"><span style="color:#111"><span class="c">阿斯顿维拉</span></span></div>
<div class="t" style="left:231px;top:501px;width:83px;height:27px;line-height:27px;color:#333"><span style="color:#ff0000">3-1</span>(1-0)</div>
<div class="t" style="left:315px;top:501px;width:36px;height:27px;line-height:27px;color:#333">4-4</div>
<div class="t" style="left:352px;top:501px;width:102px;height:27px;line-height:27px;color:#333"><span style="color:#008000"><span class="c">诺丁汉森林</span></span></div>
<div class="t" style="left:455px;top:501px;width:41px;height:27px;line-height:27px;color:#333">0.97</div>
<div class="t" style="left:497px;top:501px;width:58px;height:27px;line-height:27px;color:#333"><span style="color:#111"><span class="c">半球</span></span></div>
<div class="t" style="left:556px;top:501px;width:43px;height:27px;line-height:27px;color:#333">0.91</div>
<div class="t" style="left:600px;top:501px;width:58px;height:27px;line-height:27px;color:#333">1.90</div>
<div class="t" style="left:659px;top:501px;width:60px;height:27px;line-height:27px;color:#333">3.52</div>
<div class="t" style="left:720px;top:501px;width:60px;height:27px;line-height:27px;color:#333">4.16</div>
<div class="t" style="left:781px;top:501px;width:36px;height:27px;line-height:27px;color:#008000"><span class="c">負</span></div>
<div class="t" style="left:818px;top:501px;width:36px;height:27px;line-height:27px;color:#008000"><span class="c">輸</span></div>
<div class="t" style="left:855px;top:501px;width:54px;height:27px;line-height:27px;color:#ff0000"><span class="c">大</span></div>
<div class="t" style="left:2px;top:529px;width:68px;height:27px;line-height:27px;color:#ffffff"><span class="c">英超</span></div>
<div class="t" style="left:72px;top:529px;width:72px;height:27px;line-height:27px;color:#333">25-12-31</div>
<div class="t" style="left:145px;top:529px;width:84px;height:27px;line-height:27px;color:#333"><span style="color:#008000"><span class="c">诺丁汉森林</span></span></div>
<div class="t" style="left:231px;top:529px;width:83px;height:27px;line-height:27px;color:#333"><span style="color:#ff0000">0-2</span>(0-1)</div>
<div class="t" style="left:315px;top:529px;width:36px;height:27px;line-height:27px;color:#333">9-2</div>
<div class="t" style="left:352px;top:529px;width:102px;height:27px;line-height:27px;color:#333"><span style="color:#111"><span class="c">埃弗顿</span></span></div>
<div class="t" style="left:455px;top:529px;width:41px;height:27px;line-height:27px;color:#333">0.88</div>
<div class="t" style="left:497px;top:529px;width:58px;height:27px;line-height:27px;color:#333"><span style="color:#111"><span class="c">半球</span></span></div>
<div class="t" style="left:556px;top:529px;width:43px;height:27px;line-height:27px;color:#333">1.00</div>
<div class="t" style="left:600px;top:529px;width:58px;height:27px;line-height:27px;color:#333">1.96</div>
<div class="t" style="left:659px;top:529px;width:60px;height:27px;line-height:27px;color:#333">3.36</div>
<div class="t" style="left:720px;top:529px;width:60px;height:27px;line-height:27px;color:#333">4.19</div>
<div class="t" style="left:781px;top:529px;width:36px;height:27px;line-height:27px;color:#008000"><span class="c">負</span></div>
<div class="t" style="left:818px;top:529px;width:36px;height:27px;line-height:27px;color:#008000"><span class="c">輸</span></div>
<div class="t" style="left:855px;top:529px;width:54px;height:27px;line-height:27px;color:#008000"><span class="c">小</span></div>
<div class="t" style="left:2px;top:557px;width:68px;height:27px;line-height:27px;color:#ffffff"><span class="c">英超</span></div>
<div class="t" style="left:72px;top:557px;width:72px;height:27px;line-height:27px;color:#333">25-12-27</div>
<div class="t" style="left:145px;top:557px;width:84px;height:27px;line-height:27px;color:#333"><span style="color:#008000"><span class="c">诺丁汉森林</span></span></div>
<div class="t" style="left:231px;top:557px;width:83px;height:27px;line-height:27px;color:#333"><span style="color:#ff0000">1-2</span>(0-0)</div>
<div class="t" style="left:315px;top:557px;width:36px;height:27px;line-height:27px;color:#333">5-5</div>
<div class="t" style="left:352px;top:557px;width:102px;height:27px;line-height:27px;color:#333"><span style="color:#111"><span class="c">曼城</span></span></div>
<div class="t" style="left:455px;top:557px;width:41px;height:27px;line-height:27px;color:#333">1.04</div>
<div class="t" style="left:497px;top:557px;width:58px;height:27px;line-height:27px;color:#333"><span style="color:#ff0000">*</span><span style="color:#111"><span class="c">半</span></span>/<span style="color:#111"><span class="c">一</span></span></div>
<div class="t" style="left:556px;top:557px;width:43px;height:27px;line-height:27px;color:#333">0.84</div>
<div class="t" style="left:600px;top:557px;width:58px;height:27px;line-height:27px;color:#333">5.20</div>
<div class="t" style="left:659px;top:557px;width:60px;height:27px;line-height:27px;color:#333">4.22</div>
<div class="t" style="left:720px;top:557px;width:60px;height:27px;line-height:27px;color:#333">1.61</div>
<div class="t" style="left:781px;top:557px;width:36px;height:27px;line-height:27px;color:#008000"><span class="c">負</span></div>
<div class="t" style="left:818px;top:557px;width:36px;height:27px;line-height:27px;color:#008000"><span class="c">輸</span></div>
<div class="t" style="left:855px;top:557px;width:54px;height:27px;line-height:27px;color:#0000ff"><span class="c">走</span></div>
<div class="t" style="left:2px;top:585px;width:68px;height:27px;line-height:27px;color:#ffffff"><span class="c">英超</span></div>
<div class="t" style="left:72px;top:585px;width:72px;height:27px;line-height:27px;color:#333">25-12-23</div>
<div class="t" style="left:145px;top:585px;width:84px;height:27px;line-height:27px;color:#333"><span style="color:#111"><span class="c">富勒姆</span></span></div>
<div class="t" style="left:231px;top:585px;width:83px;height:27px;line-height:27px;color:#333"><span style="color:#ff0000">1-0</span>(1-0)</div>
<div class="t" style="left:315px;top:585px;width:36px;height:27px;line-height:27px;color:#333">1-5</div>
<div class="t" style="left:352px;top:585px;width:102px;height:27px;line-height:27px;color:#333"><span style="color:#008000"><span class="c">诺丁汉森林</span></span></div>
<div class="t" style="left:455px;top:585px;width:41px;height:27px;line-height:27px;color:#333">0.89</div>
<div class="t" style="left:497px;top:585px;width:58px;height:27px;line-height:27px;color:#333"><span style="color:#111"><span class="c">平手</span></span></div>
<div class="t" style="left:556px;top:585px;width:43px;height:27px;line-height:27px;color:#333">0.99</div>
<div class="t" style="left:600px;top:585px;width:58px;height:27px;line-height:27px;color:#333">2.56</div>
<div class="t" style="left:659px;top:585px;width:60px;height:27px;line-height:27px;color:#333">3.31</div>
<div class="t" style="left:720px;top:585px;width:60px;height:27px;line-height:27px;color:#333">2.80</div>
<div class="t" style="left:781px;top:585px;width:36px;height:27px;line-height:27px;color:#008000"><span class="c">負</span></div>
<div class="t" style="left:818px;top:585px;width:36px;height:27px;line-height:27px;color:#008000"><span class="c">輸</span></div>
<div class="t" style="left:855px;top:585px;width:54px;height:27px;line-height:27px;color:#008000"><span class="c">小</span></div>
<div class="t" style="left:2px;top:613px;width:68px;height:27px;line-height:27px;color:#ffffff"><span class="c">英超</span></div>
<div class="t" style="left:72px;top:613px;width:72px;height:27px;line-height:27px;color:#333">25-12-14</div>
<div class="t" style="left:145px;top:613px;width:84px;height:27px;line-height:27px;color:#333"><span style="color:#008000"><span class="c">诺丁汉森林</span></span></div>
<div class="t" style="left:231px;top:613px;width:83px;height:27px;line-height:27px;color:#333"><span style="color:#ff0000">3-0</span>(1-0)</div>
<div class="t" style="left:315px;top:613px;width:36px;height:27px;line-height:27px;color:#333">3-3</div>
<div class="t" style="left:352px;top:613px;width:102px;height:27px;line-height:27px;color:#333"><span style="color:#111"><span class="c">托特纳姆热刺</span></span></div>
<div class="t" style="left:455px;top:613px;width:41px;height:27px;line-height:27px;color:#333">0.95</div>
<div class="t" style="left:497px;top:613px;width:58px;height:27px;line-height:27px;color:#333"><span style="color:#111"><span class="c">平手</span></span></div>
<div class="t" style="left:556px;top:613px;width:43px;height:27px;line-height:27px;color:#333">0.93</div>
<div class="t" style="left:600px;top:613px;width:58px;height:27px;line-height:27px;color:#333">2.66</div>
<div class="t" style="left:659px;top:613px;width:60px;height:27px;line-height:27px;color:#333">3.31</div>
<div class="t" style="left:720px;top:613px;width:60px;height:27px;line-height:27px;color:#333">2.69</div>
<div class="t" style="left:781px;top:613px;width:36px;height:27px;line-height:27px;color:#ff0000"><span class="c">勝</span></div>
<div class="t" style="left:818px;top:613px;width:36px;height:27px;line-height:27px;color:#ff0000"><span class="c">贏</span></div>
<div class="t" style="left:855px;top:613px;width:54px;height:27px;line-height:27px;color:#ff0000"><span class="c">大</span></div>
<div class="t" style="left:2px;top:641px;width:68px;height:27px;line-height:27px;color:#ffffff"><span class="c">欧罗巴杯</span></div>
<div class="t" style="left:72px;top:641px;width:72px;height:27px;line-height:27px;color:#333">25-12-12</div>
<div class="t" style="left:145px;top:641px;width:84px;height:27px;line-height:27px;color:#333"><span style="color:#111"><span class="c">乌德勒支</span></span></div>
<div class="t" style="left:231px;top:641px;width:83px;height:27px;line-height:27px;color:#333"><span style="color:#ff0000">1-2</span>(0-0)</div>
<div class="t" style="left:315px;top:641px;width:36px;height:27px;line-height:27px;color:#333">7-5</div>
<div class="t" style="left:352px;top:641px;width:102px;height:27px;line-height:27px;color:#333"><span style="color:#008000"><span class="c">诺丁汉森林</span></span></div>
<div class="t" style="left:455px;top:641px;width:41px;height:27px;line-height:27px;color:#333">1.06</div>
<div class="t" style="left:497px;top:641px;width:58px;height:27px;line-height:27px;color:#333"><span style="color:#ff0000">*</span><span style="color:#111"><span class="c">半球</span></span></div>
<div class="t" style="left:556px;top:641px;width:43px;height:27px;line-height:27px;color:#333">0.82</div>
<div class="t" style="left:600px;top:641px;width:58px;height:27px;line-height:27px;color:#333">4.39</div>
<div class="t" style="left:659px;top:641px;width:60px;height:27px;line-height:27px;color:#333">3.68</div>
<div class="t" style="left:720px;top:641px;width:60px;height:27px;line-height:27px;color:#333">1.80</div>
<div class="t" style="left:781px;top:641px;width:36px;height:27px;line-height:27px;color:#ff0000"><span class="c">勝</span></div>
<div class="t" style="left:818px;top:641px;width:36px;height:27px;line-height:27px;color:#ff0000"><span class="c">贏</span></div>
<div class="t" style="left:855px;top:641px;width:54px;height:27px;line-height:27px;color:#ff0000"><span class="c">大</span></div>
<div class="t" style="left:2px;top:669px;width:68px;height:27px;line-height:27px;color:#ffffff"><span class="c">英超</span></div>
<div class="t" style="left:72px;top:669px;width:72px;height:27px;line-height:27px;color:#333">25-12-06</div>
<div class="t" style="left:145px;top:669px;width:84px;height:27px;line-height:27px;color:#333"><span style="color:#111"><span class="c">埃弗顿</span></span></div>
<div class="t" style="left:231px;top:669px;width:83px;height:27px;line-height:27px;color:#333"><span style="color:#ff0000">3-0</span>(2-0)</div>
<div class="t" style="left:315px;top:669px;width:36px;height:27px;line-height:27px;color:#333">6-3</div>
<div class="t" style="left:352px;top:669px;width:102px;height:27px;line-height:27px;color:#333"><span style="color:#008000"><span class="c">诺丁汉森林</span></span></div>
<div class="t" style="left:455px;top:669px;width:41px;height:27px;line-height:27px;color:#333">1.07</div>
<div class="t" style="left:497px;top:669px;width:58px;height:27px;line-height:27px;color:#333"><span style="color:#111"><span class="c">半球</span></span></div>
<div class="t" style="left:556px;top:669px;width:43px;height:27px;line-height:27px;color:#333">0.81</div>
<div class="t" style="left:600px;top:669px;width:58px;height:27px;line-height:27px;color:#333">2.10</div>
<div class="t" style="left:659px;top:669px;width:60px;height:27px;line-height:27px;color:#333">3.26</div>
<div class="t" style="left:720px;top:669px;width:60px;height:27px;line-height:27px;color:#333">3.73</div>
<div class="t" style="left:781px;top:669px;width:36px;height:27px;line-height:27px;color:#008000"><span class="c">負</span></div>
<div class="t" style="left:818px;top:669px;width:36px;height:27px;line-height:27px;color:#008000"><span class="c">輸</span></div>
<div class="t" style="left:855px;top:669px;width:54px;height:27px;line-height:27px;color:#ff0000"><span class="c">大</span></div>
<div class="t" style="left:2px;top:697px;width:68px;height:27px;line-height:27px;color:#ffffff"><span class="c">英超</span></div>
<div class="t" style="left:72px;top:697px;width:72px;height:27px;line-height:27px;color:#333">25-12-04</div>
<div class="t" style="left:145px;top:697px;width:84px;height:27px;line-height:27px;color:#333"><span style="color:#111"><span class="c">狼队</span></span></div>
<div class="t" style="left:231px;top:697px;width:83px;height:27px;line-height:27px;color:#333"><span style="color:#ff0000">0-1</span>(0-0)</div>
<div class="t" style="left:315px;top:697px;width:36px;height:27px;line-height:27px;color:#333">3-9</div>
<div class="t" style="left:352px;top:697px;width:102px;height:27px;line-height:27px;color:#333"><span style="color:#008000"><span class="c">诺丁汉森林</span></span></div>
<div class="t" style="left:455px;top:697px;width:41px;height:27px;line-height:27px;color:#333">0.84</div>
<div class="t" style="left:497px;top:697px;width:58px;height:27px;line-height:27px;color:#333"><span style="color:#ff0000">*</span><span style="color:#111"><span class="c">平</span></span>/<span style="color:#111"><span class="c">半</span></span></div>
<div class="t" style="left:556px;top:697px;width:43px;height:27px;line-height:27px;color:#333">1.04</div>
<div class="t" style="left:600px;top:697px;width:58px;height:27px;line-height:27px;color:#333">3.14</div>
<div class="t" style="left:659px;top:697px;width:60px;height:27px;line-height:27px;color:#333">3.25</div>
<div class="t" style="left:720px;top:697px;width:60px;height:27px;line-height:27px;color:#333">2.36</div>
<div class="t" style="left:781px;top:697px;width:36px;height:27px;line-height:27px;color:#ff0000"><span class="c">勝</span></div>
<div class="t" style="left:818px;top:697px;width:36px;height:27px;line-height:27px;color:#ff0000"><span class="c">贏</span></div>
<div class="t" style="left:855px;top:697px;width:54px;height:27px;line-height:27px;color:#008000"><span class="c">小</span></div>
<div class="t" style="left:2px;top:725px;width:68px;height:27px;line-height:27px;color:#ffffff"><span class="c">英超</span></div>
<div class="t" style="left:72px;top:725px;width:72px;height:27px;line-height:27px;color:#333">25-11-30</div>
<div class="t" style="left:145px;top:725px;width:84px;height:27px;line-height:27px;color:#333"><span style="color:#008000"><span class="c">诺丁汉森林</span></span></div>
<div class="t" style="left:231px;top:725px;width:83px;height:27px;line-height:27px;color:#333"><span style="color:#ff0000">0-2</span>(0-1)</div>
<div class="t" style="left:315px;top:725px;width:36px;height:27px;line-height:27px;color:#333">9-2</div>
<div class="t" style="left:352px;top:725px;width:102px;height:27px;line-height:27px;color:#333"><span style="color:#111"><span class="c">布莱顿</span></span></div>
<div class="t" style="left:455px;top:725px;width:41px;height:27px;line-height:27px;color:#333">1.13</div>
<div class="t" style="left:497px;top:725px;width:58px;height:27px;line-height:27px;color:#333"><span style="color:#111"><span class="c">平手</span></span></div>
<div class="t" style="left:556px;top:725px;width:43px;height:27px;line-height:27px;color:#333">0.76</div>
<div class="t" style="left:600px;top:725px;width:58px;height:27px;line-height:27px;color:#333">2.81</div>
<div class="t" style="left:659px;top:725px;width:60px;height:27px;line-height:27px;color:#333">3.31</div>
<div class="t" style="left:720px;top:725px;width:60px;height:27px;line-height:27px;color:#333">2.54</div>
<div class="t" style="left:781px;top:725px;width:36px;height:27px;line-height:27px;color:#008000"><span class="c">負</span></div>
<div class="t" style="left:818px;top:725px;width:36px;height:27px;line-height:27px;color:#008000"><span class="c">輸</span></div>
<div class="t" style="left:855px;top:725px;width:54px;height:27px;line-height:27px;color:#008000"><span class="c">小</span></div>
<div class="sel" style="left:475px;top:432px;width:57px;height:18px"></div>
<div class="selt" style="left:480px;top:432px;height:20px;line-height:20px;font-size:12px">Crow*</div>
<div class="arr" style="left:521px;top:439px"></div>
<div class="sel" style="left:542px;top:432px;width:34px;height:18px"></div>
<div class="selt" style="left:547px;top:432px;height:20px;line-height:20px;font-size:12px"><span class="c">终</span></div>
<div class="arr" style="left:565px;top:439px"></div>
<div class="sel" style="left:626px;top:432px;width:82px;height:18px"></div>
<div class="selt" style="left:631px;top:432px;height:20px;line-height:20px;font-size:12px"><span class="c">胜平负均值</span></div>
<div class="arr" style="left:697px;top:439px"></div>
<div class="sel" style="left:718px;top:432px;width:34px;height:18px"></div>
<div class="selt" style="left:723px;top:432px;height:20px;line-height:20px;font-size:12px"><span class="c">终</span></div>
<div class="arr" style="left:741px;top:439px"></div>
<div class="sel" style="left:821px;top:432px;width:46px;height:18px"></div>
<div class="selt" style="left:826px;top:432px;height:20px;line-height:20px;font-size:12px"><span class="c">全场</span></div>
<div class="arr" style="left:856px;top:439px"></div>
</div></body></html>
